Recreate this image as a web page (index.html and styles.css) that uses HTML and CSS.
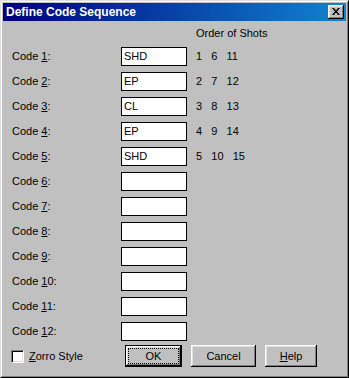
FILE: index.html
```html
<!DOCTYPE html>
<html>
<head>
<meta charset="utf-8">
<link rel="stylesheet" href="styles.css">
</head>
<body>
<div class="window">
  <div class="frame">
    <div class="titlebar">
      <span class="title">Define Code Sequence</span>
      <span class="close">
        <svg width="8" height="7" viewBox="0 0 8 7"><path d="M0 0h2l2 2.5L6 0h2L5 3.5 8 7H6L4 4.5 2 7H0l3-3.5z" fill="#000"/></svg>
      </span>
    </div>
    <div class="content">
      <div class="header">Order of Shots</div>
      <div class="rows">
        <span class="label">Code <u>1</u>:</span><span class="box">SHD</span><span class="nums">1   6   11</span>
        <span class="label">Code <u>2</u>:</span><span class="box">EP</span><span class="nums">2   7   12</span>
        <span class="label">Code <u>3</u>:</span><span class="box">CL</span><span class="nums">3   8   13</span>
        <span class="label">Code <u>4</u>:</span><span class="box">EP</span><span class="nums">4   9   14</span>
        <span class="label">Code <u>5</u>:</span><span class="box">SHD</span><span class="nums">5   10   15</span>
        <span class="label">Code <u>6</u>:</span><span class="box"></span><span class="nums"></span>
        <span class="label">Code <u>7</u>:</span><span class="box"></span><span class="nums"></span>
        <span class="label">Code <u>8</u>:</span><span class="box"></span><span class="nums"></span>
        <span class="label">Code <u>9</u>:</span><span class="box"></span><span class="nums"></span>
        <span class="label">Code <u>1</u>0:</span><span class="box"></span><span class="nums"></span>
        <span class="label">Code <u>1</u>1:</span><span class="box"></span><span class="nums"></span>
        <span class="label">Code <u>1</u>2:</span><span class="box"></span><span class="nums"></span>
      </div>
      <div class="bottom">
        <label class="check"><span class="checkbox"></span><span><u>Z</u>orro Style</span></label>
        <span class="btn default ok"><span class="focus">OK</span></span>
        <span class="btn cancel"><span class="plain">Cancel</span></span>
        <span class="btn help"><span class="plain"><u>H</u>elp</span></span>
      </div>
    </div>
  </div>
</div>
</body>
</html>
```
FILE: styles.css
```css
html, body {
  margin: 0;
  padding: 0;
  background: #c0c0c0;
}
body {
  font-family: "Liberation Sans", Arial, sans-serif;
  font-size: 11px;
  color: #000;
}
.window {
  width: 349px;
  height: 378px;
  box-sizing: border-box;
  background: #c0c0c0;
  border: 1px solid;
  border-color: #dfdfdf #000 #000 #dfdfdf;
}
.frame {
  height: 100%;
  box-sizing: border-box;
  border: 1px solid;
  border-color: #fff #808080 #808080 #fff;
  padding: 1px;
}
.titlebar {
  height: 18px;
  display: flex;
  align-items: flex-start;
  justify-content: space-between;
  background: linear-gradient(to right, #000080, #1084d0);
}
.title {
  color: #fff;
  font-weight: bold;
  font-size: 12px;
  line-height: 18px;
  padding-left: 3px;
}
.close {
  width: 16px;
  height: 14px;
  margin: 2px 2px 0 0;
  box-sizing: border-box;
  background: #c0c0c0;
  box-shadow: inset -1px -1px #000, inset 1px 1px #fff, inset -2px -2px #808080, inset 2px 2px #dfdfdf;
  display: flex;
  align-items: center;
  justify-content: center;
  padding: 0 1px 1px 0;
}
.content {
  padding: 3px 0 0 9px;
}
.header {
  height: 19px;
  line-height: 19px;
  margin-left: 184px;
  margin-bottom: 4px;
}
.rows {
  display: grid;
  grid-template-columns: 109px 66px auto;
  grid-auto-rows: 19px;
  row-gap: 6px;
  align-items: center;
}
.label {
  line-height: 19px;
}
.box {
  height: 19px;
  box-sizing: border-box;
  border: 1px solid #000;
  background: #fff;
  line-height: 17px;
  padding-left: 2px;
}
.nums {
  white-space: pre;
  margin-left: 9px;
  line-height: 19px;
}
.bottom {
  display: flex;
  align-items: center;
  height: 22px;
  margin-top: 4px;
}
.check {
  width: 114px;
  display: flex;
  align-items: center;
  gap: 5px;
  margin-left: -1px;
}
.checkbox {
  width: 13px;
  height: 13px;
  box-sizing: border-box;
  background: #fff;
  border: 1px solid;
  border-color: #808080 #fff #fff #808080;
  box-shadow: inset 1px 1px #000, inset -1px -1px #dfdfdf;
}
.btn {
  height: 22px;
  box-sizing: border-box;
  display: flex;
  background: #c0c0c0;
}
.btn .plain {
  flex: 1;
  display: flex;
  align-items: center;
  justify-content: center;
  box-shadow: inset -1px -1px #000, inset 1px 1px #fff, inset -2px -2px #808080, inset 2px 2px #dfdfdf;
}
.btn.default {
  border: 1px solid #000;
  box-shadow: inset -1px -1px #000, inset 1px 1px #fff, inset -2px -2px #808080, inset 2px 2px #dfdfdf;
  padding: 2px;
}
.focus {
  flex: 1;
  border: 1px dotted #000;
  display: flex;
  align-items: center;
  justify-content: center;
}
.ok { width: 57px; }
.cancel { width: 65px; margin-left: 9px; }
.help { width: 52px; margin-left: 9px; }
```
